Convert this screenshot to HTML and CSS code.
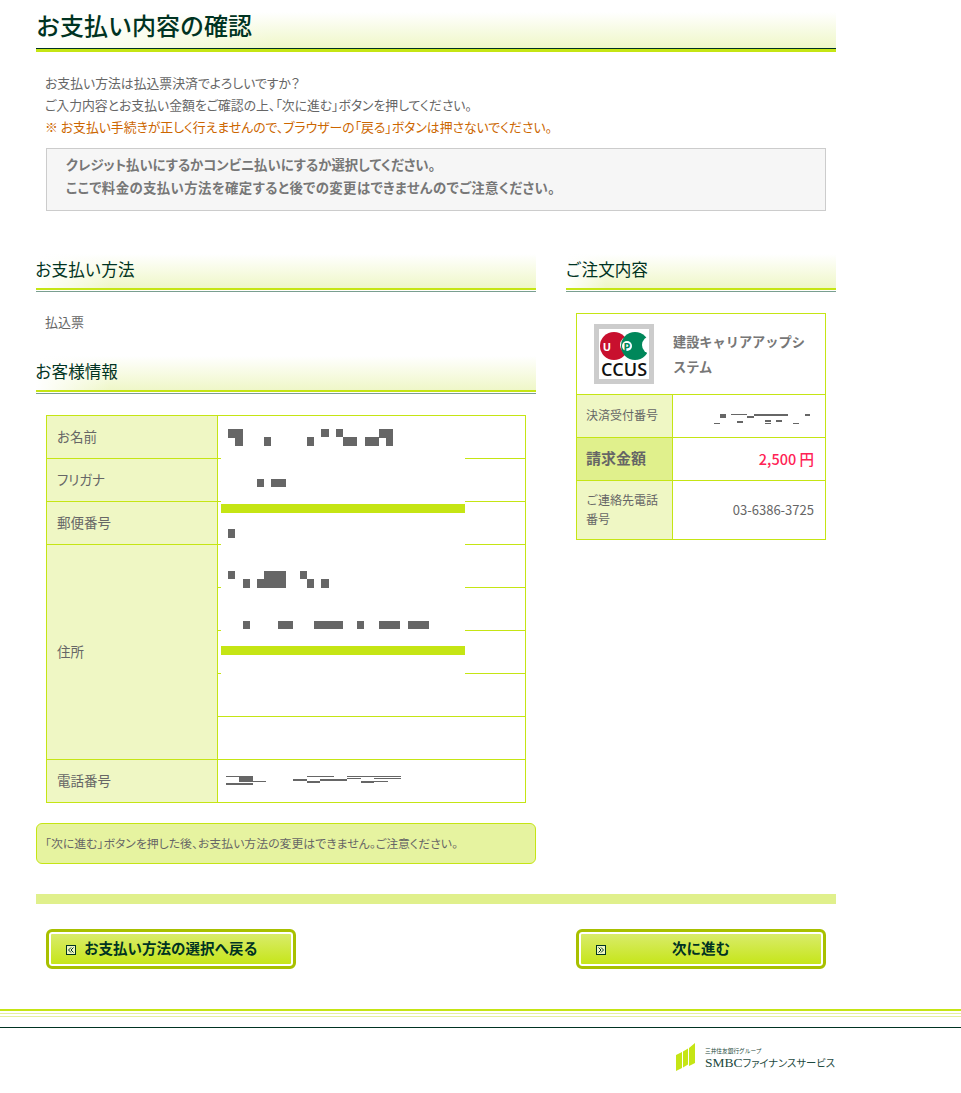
FILE: index.html
```html
<!DOCTYPE html>
<html lang="ja">

<head>
    <meta charset="UTF-8" />
    <title>お支払い内容の確認</title>
    <link rel="stylesheet" href="styles.css">
</head>

<body>
    <div class="container">
        <h1 class="page-title">お支払い内容の確認</h1>

        <div class="intro">
            <p>お支払い方法は払込票決済でよろしいですか？</p>
            <p>ご入力内容とお支払い金額をご確認の上、「次に進む」ボタンを押してください。</p>
            <p class="caution">※ お支払い手続きが正しく行えませんので、ブラウザーの「戻る」ボタンは押さないでください。</p>
        </div>

        <div class="notice">
            <p>クレジット払いにするかコンビニ払いにするか選択してください。</p>
            <p class="notice-wide">ここで料金の支払い方法を確定すると後での変更はできませんのでご注意ください。</p>
        </div>

        <div class="columns">
            <div class="col-main">
                <h2 class="section-title">お支払い方法</h2>
                <p class="method">払込票</p>

                <h2 class="section-title">お客様情報</h2>
                <div class="table-wrap">
                    <table class="info-table">
                        <tr><th>お名前</th><td></td></tr>
                        <tr><th>フリガナ</th><td></td></tr>
                        <tr><th>郵便番号</th><td></td></tr>
                        <tr><th rowspan="5">住所</th><td></td></tr>
                        <tr><td></td></tr>
                        <tr><td></td></tr>
                        <tr><td></td></tr>
                        <tr><td></td></tr>
                        <tr><th>電話番号</th><td></td></tr>
                    </table>
                    <!-- masked values, coordinates are page pixels -->
                    <svg class="mask" viewBox="46 415 480 388" width="480" height="388">
                        <rect x="221" y="417" width="244" height="257" fill="#fff" />
                        <rect x="221" y="504" width="244" height="9" fill="#c5e514" />
                        <rect x="221" y="646" width="244" height="9" fill="#c5e514" />
                        <g fill="#666">
                            <path d="M228 429h15v17h-8v-8h-7z" />
                            <rect x="264" y="437" width="7" height="9" />
                            <rect x="307" y="437" width="7" height="9" />
                            <rect x="321" y="429" width="8" height="8" />
                            <path d="M336 429h7v8h14v9h-14v-9h-7z" />
                            <path d="M365 437h14v-8h14v17h-7v-8h-7v8h-14z" />
                            <rect x="257" y="479" width="7" height="8" />
                            <rect x="271" y="479" width="15" height="8" />
                            <rect x="228" y="529" width="7" height="9" />
                            <rect x="228" y="571" width="7" height="8" />
                            <rect x="243" y="579" width="7" height="9" />
                            <path d="M264 571h22v17h-29v-9h7z" />
                            <path d="M300 571h7v8h7v9h-7v-9h-7z" />
                            <rect x="321" y="579" width="8" height="9" />
                            <rect x="243" y="621" width="7" height="8" />
                            <rect x="278" y="621" width="15" height="8" />
                            <rect x="314" y="621" width="29" height="8" />
                            <rect x="357" y="621" width="7" height="8" />
                            <rect x="379" y="621" width="21" height="8" />
                            <rect x="408" y="621" width="21" height="8" />
                            <rect x="226" y="776" width="13" height="1" />
                            <rect x="239" y="776" width="14" height="5" />
                            <rect x="239" y="781" width="27" height="1" />
                            <rect x="226" y="783" width="27" height="2" />
                            <rect x="307" y="776" width="27" height="1" />
                            <rect x="293" y="779" width="14" height="2" />
                            <rect x="320" y="779" width="27" height="2" />
                            <rect x="307" y="781" width="13" height="2" />
                            <rect x="347" y="776" width="54" height="1" />
                            <rect x="347" y="778" width="14" height="1" />
                            <rect x="374" y="778" width="27" height="1" />
                            <rect x="361" y="781" width="13" height="2" />
                            <rect x="374" y="781" width="14" height="1" />
                        </g>
                    </svg>
                </div>

                <div class="warning">「次に進む」ボタンを押した後、お支払い方法の変更はできません。ご注意ください。</div>
            </div>

            <div class="col-side">
                <h2 class="section-title">ご注文内容</h2>
                <table class="order-table">
                    <tr class="product">
                        <td class="product-logo">
                            <svg viewBox="0 0 60 60" width="60" height="60">
                                <circle cx="20" cy="22" r="14" fill="#c8102e" />
                                <circle cx="35" cy="21" r="9" fill="#fff" />
                                <text x="13" y="27" class="logo-letter" fill="#fff">U</text>
                                <circle cx="41" cy="22" r="14" fill="#00875a" />
                                <circle cx="57" cy="21" r="9" fill="#fff" />
                                <circle cx="33" cy="22" r="5" fill="#fff" />
                                <text x="33" y="26.5" class="logo-letter" fill="#00875a">P</text>
                                <text x="30" y="52" class="logo-ccus">CCUS</text>
                                <rect x="2.5" y="2.5" width="55" height="55" fill="none" stroke="#ccc" stroke-width="5" />
                            </svg>
                        </td>
                        <td class="product-name">建設キャリアアップシステム</td>
                    </tr>
                    <tr>
                        <th>決済受付番号</th>
                        <td class="num">
                            <svg viewBox="715 406 96 18" width="96" height="18">
                                <g fill="#666">
                                    <rect x="721" y="414" width="6" height="2" />
                                    <rect x="732" y="414" width="16" height="1" />
                                    <rect x="755" y="414" width="34" height="2" />
                                    <rect x="806" y="414" width="5" height="2" />
                                    <rect x="721" y="416" width="6" height="2" />
                                    <rect x="748" y="416" width="7" height="2" />
                                    <rect x="738" y="421" width="6" height="2" />
                                    <rect x="766" y="420" width="6" height="2" />
                                    <rect x="777" y="420" width="6" height="2" />
                                    <rect x="715" y="423" width="6" height="2" />
                                    <rect x="766" y="423" width="6" height="2" />
                                    <rect x="794" y="423" width="6" height="2" />
                                </g>
                            </svg>
                        </td>
                    </tr>
                    <tr class="total">
                        <th>請求金額</th>
                        <td class="num">2,500 円</td>
                    </tr>
                    <tr class="tall">
                        <th>ご連絡先電話番号</th>
                        <td class="num">03-6386-3725</td>
                    </tr>
                </table>
            </div>
        </div>

        <div class="divider"></div>

        <div class="buttons">
            <button class="btn">
                <svg class="btn-icon" viewBox="0 0 10 10" width="10" height="10">
                    <rect x="0.5" y="0.5" width="9" height="9" fill="#eef6c0" stroke="#003322" />
                    <path d="M5 2.5L2.5 5L5 7.5M7.5 2.5L5 5L7.5 7.5" fill="none" stroke="#003322" />
                </svg>
                お支払い方法の選択へ戻る
            </button>
            <button class="btn btn-next">
                <svg class="btn-icon" viewBox="0 0 10 10" width="10" height="10">
                    <rect x="0.5" y="0.5" width="9" height="9" fill="#eef6c0" stroke="#003322" />
                    <path d="M2.5 2.5L5 5L2.5 7.5M5 2.5L7.5 5L5 7.5" fill="none" stroke="#003322" />
                </svg>
                次に進む
            </button>
        </div>
    </div>

    <footer class="footer">
        <div class="footer-lines"></div>
        <div class="brand">
            <svg class="brand-mark" viewBox="0 0 20 28" width="20" height="28">
                <path d="M0 12l6-3v16l-6 3zM7 8.5l5-3v16l-5 3zM13 5l6-5v20l-6 3z" fill="#c5e514" />
            </svg>
            <div>
                <div class="brand-group">三井住友銀行グループ</div>
                <div class="brand-name"><span class="brand-smbc">SMBC</span>ファイナンスサービス</div>
            </div>
        </div>
    </footer>
</body>

</html>
```

FILE: styles.css
```css
body {
    margin: 0;
    font-family: "Noto Sans CJK JP", "Noto Sans", sans-serif;
    font-size: 12px;
    color: #666;
    background: #fff;
}

p {
    margin: 0;
}

.container {
    width: 800px;
    margin-left: 36px;
    padding-top: 12px;
}

/* Titles */
.page-title {
    height: 36px;
    margin: 0;
    font-size: 24px;
    font-weight: 500;
    line-height: 25px;
    color: #003322;
    background: linear-gradient(to right, #fff, rgba(255 255 255 / 0) 30%), linear-gradient(#fff, #eff7c8);
    border-bottom: 1px solid #003322;
    box-shadow: 0 3px 0 #c5e514;
}

.section-title {
    height: 34px;
    margin: 0;
    font-size: 16.6px;
    font-weight: 400;
    line-height: 31px;
    text-indent: -1px;
    color: #003322;
    background: linear-gradient(to right, #fff, rgba(255 255 255 / 0) 15%), linear-gradient(#fff, #eff7c8);
    border-bottom: 2px solid #c5e514;
    box-shadow: 0 1px 0 #fff, 0 2px 0 #7a9f90;
}

/* Intro */
.intro {
    margin-top: 23px;
    padding-left: 9px;
    font-size: 12.85px;
    line-height: 22px;
    font-feature-settings: "palt";
}

.caution {
    color: #cc6600;
}

.notice {
    width: 780px;
    height: 63px;
    margin: 10px 0 0 10px;
    padding: 4px 0 0 19px;
    box-sizing: border-box;
    border: 1px solid #ccc;
    background: #f6f6f6;
    font-size: 13.4px;
    font-weight: 700;
    line-height: 23px;
    color: #777;
    font-feature-settings: "palt";
}

.notice-wide {
    letter-spacing: 0.4px;
}

/* Two columns */
.columns {
    display: flex;
    gap: 30px;
    margin-top: 43px;
}

.col-main {
    width: 500px;
}

.col-side {
    width: 270px;
}

.method {
    height: 66px;
    padding: 22px 0 0 9px;
    box-sizing: border-box;
    font-size: 13px;
    line-height: 20px;
}

.table-wrap {
    position: relative;
    width: 480px;
    margin: 23px 0 0 10px;
}

.mask {
    position: absolute;
    top: 0;
    left: 0;
}

table {
    border-collapse: collapse;
}

.info-table {
    width: 480px;
    table-layout: fixed;
}

.info-table th,
.info-table td {
    height: 42px;
    padding: 0;
    border: 1px solid #c5e514;
}

.info-table th {
    width: 171px;
    padding: 0 0 2px 10px;
    box-sizing: border-box;
    text-align: left;
    font-size: 13.5px;
    font-weight: 400;
    font-feature-settings: "palt";
    background: #eff7c4;
}

.warning {
    height: 41px;
    margin-top: 20px;
    padding-left: 8px;
    box-sizing: border-box;
    border: 1px solid #c5e514;
    border-radius: 6px;
    background: #e6f3a0;
    font-size: 11.9px;
    line-height: 37px;
    font-feature-settings: "palt";
}

/* Order table */
.order-table {
    width: 250px;
    margin: 23px 0 0 10px;
    table-layout: fixed;
}

.order-table th,
.order-table td {
    height: 42px;
    padding: 0;
    border: 1px solid #c5e514;
}

.order-table th {
    padding: 0 9px 3px;
    box-sizing: border-box;
    text-align: left;
    font-size: 12px;
    font-weight: 400;
    line-height: 19px;
    background: #eff7c4;
}

.order-table .product td {
    height: 80px;
}

.product-logo {
    width: 95px;
    border-right: none !important;
}

.product-logo svg {
    display: block;
    margin-left: 17px;
}

.product-name {
    padding: 0 16px 0 1px !important;
    border-left: none !important;
    font-size: 13.2px;
    font-weight: 700;
    line-height: 25px;
    color: #777;
}

.order-table .num {
    height: 40px;
    padding: 0 11px 2px 0;
    text-align: right;
    font-size: 13px;
}

.num svg {
    display: block;
    margin: 0 4px 0 auto;
}

.total th {
    font-size: 15px;
    font-weight: 700;
    background: #e0f08c;
}

.order-table .total .num {
    font-size: 14.5px;
    font-weight: 500;
    color: #ff2255;
}

.order-table .tall th {
    height: 58px;
}

.order-table .tall .num {
    height: 56px;
}

.logo-letter {
    font-family: "Open Sans", sans-serif;
    font-size: 11px;
    font-weight: 700;
    text-anchor: middle;
}

.logo-ccus {
    font-family: "Open Sans", sans-serif;
    font-size: 18px;
    font-weight: 600;
    text-anchor: middle;
    fill: #111;
}

/* Bottom */
.divider {
    height: 10px;
    margin-top: 30px;
    background: #e0f08c;
}

.buttons {
    display: flex;
    justify-content: space-between;
    padding: 25px 10px 0;
}

.btn {
    position: relative;
    width: 250px;
    height: 40px;
    padding: 0 0 3px 35px;
    text-align: left;
    font-family: inherit;
    font-size: 14.5px;
    font-weight: 700;
    color: #003322;
    background: linear-gradient(#daec70, #c5e514);
    border: 3px solid #a8c000;
    border-radius: 6px;
    box-shadow: inset 0 0 0 2px #fff;
}

.btn-next {
    padding-left: 0;
    text-align: center;
}

.btn-icon {
    position: absolute;
    top: 13px;
    left: 17px;
}

.footer {
    margin-top: 40px;
    border-top: 2px solid #c5e514;
}

.footer-lines {
    height: 2px;
    margin-top: 2px;
    border-top: 1px solid #e5f09c;
    border-bottom: 1px solid #e5f09c;
}

.brand {
    display: flex;
    gap: 9px;
    margin-top: 10px;
    padding: 15px 0 23px 676px;
    border-top: 1px solid #003322;
    color: #1d4a40;
    white-space: nowrap;
}

.brand-mark {
    flex: none;
}

.brand-group {
    margin-top: 3px;
    font-size: 5.7px;
    line-height: 10px;
}

.brand-name {
    font-size: 10.3px;
    line-height: 13px;
    font-feature-settings: "palt";
}

.brand-smbc {
    font-family: "Liberation Serif", serif;
    font-size: 13.5px;
}
```
